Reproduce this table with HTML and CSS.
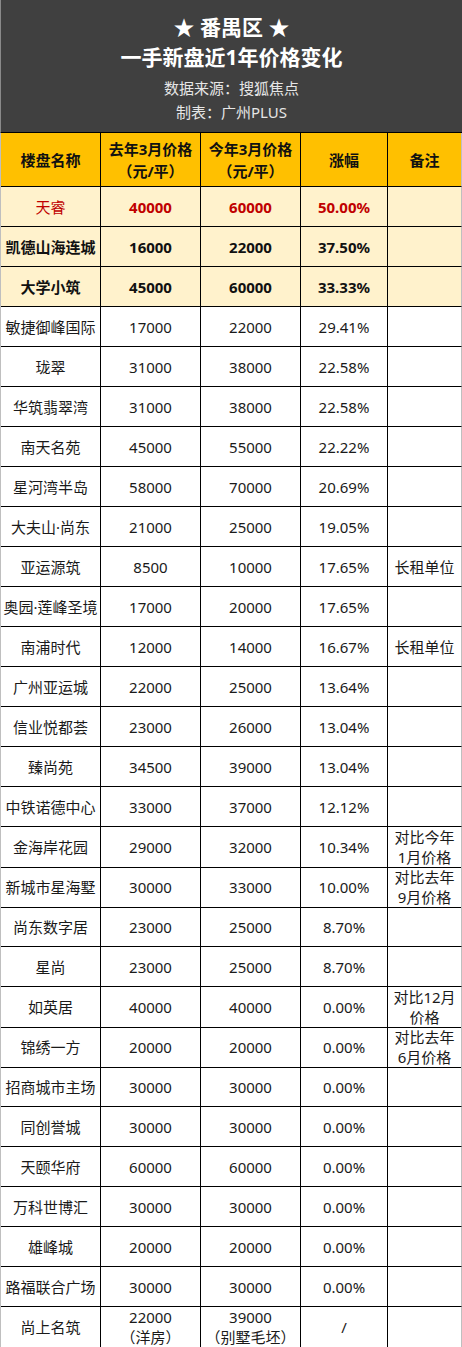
FILE: index.html
```html
<!DOCTYPE html>
<html lang="zh-CN">
<head>
    <meta charset="UTF-8">
    <meta name="viewport" content="width=device-width, initial-scale=1.0">
    <title>番禺区 一手新盘近1年价格变化</title>
    <link rel="stylesheet" href="styles.css">
</head>
<body>
    <div class="sheet">
        <header class="banner">
            <div class="title">★ 番禺区 ★</div>
            <div class="title">一手新盘近1年价格变化</div>
            <div class="sub">数据来源：搜狐焦点</div>
            <div class="sub">制表：广州PLUS</div>
        </header>

        <div class="grid">
            <div class="row head">
                <div class="cell">楼盘名称</div>
                <div class="cell"><span>去年3月价格</span><span>（元/平）</span></div>
                <div class="cell"><span>今年3月价格</span><span>（元/平）</span></div>
                <div class="cell">涨幅</div>
                <div class="cell">备注</div>
            </div>

            <!-- top three -->
            <div class="row top first">
                <div class="cell name">天睿</div>
                <div class="cell">40000</div>
                <div class="cell">60000</div>
                <div class="cell">50.00%</div>
                <div class="cell"></div>
            </div>
            <div class="row top">
                <div class="cell">凯德山海连城</div>
                <div class="cell">16000</div>
                <div class="cell">22000</div>
                <div class="cell">37.50%</div>
                <div class="cell"></div>
            </div>
            <div class="row top">
                <div class="cell">大学小筑</div>
                <div class="cell">45000</div>
                <div class="cell">60000</div>
                <div class="cell">33.33%</div>
                <div class="cell"></div>
            </div>

            <div class="row">
                <div class="cell">敏捷御峰国际</div>
                <div class="cell">17000</div>
                <div class="cell">22000</div>
                <div class="cell">29.41%</div>
                <div class="cell"></div>
            </div>
            <div class="row">
                <div class="cell">珑翠</div>
                <div class="cell">31000</div>
                <div class="cell">38000</div>
                <div class="cell">22.58%</div>
                <div class="cell"></div>
            </div>
            <div class="row">
                <div class="cell">华筑翡翠湾</div>
                <div class="cell">31000</div>
                <div class="cell">38000</div>
                <div class="cell">22.58%</div>
                <div class="cell"></div>
            </div>
            <div class="row">
                <div class="cell">南天名苑</div>
                <div class="cell">45000</div>
                <div class="cell">55000</div>
                <div class="cell">22.22%</div>
                <div class="cell"></div>
            </div>
            <div class="row">
                <div class="cell">星河湾半岛</div>
                <div class="cell">58000</div>
                <div class="cell">70000</div>
                <div class="cell">20.69%</div>
                <div class="cell"></div>
            </div>
            <div class="row">
                <div class="cell">大夫山·尚东</div>
                <div class="cell">21000</div>
                <div class="cell">25000</div>
                <div class="cell">19.05%</div>
                <div class="cell"></div>
            </div>
            <div class="row">
                <div class="cell">亚运源筑</div>
                <div class="cell">8500</div>
                <div class="cell">10000</div>
                <div class="cell">17.65%</div>
                <div class="cell">长租单位</div>
            </div>
            <div class="row">
                <div class="cell">奥园·莲峰圣境</div>
                <div class="cell">17000</div>
                <div class="cell">20000</div>
                <div class="cell">17.65%</div>
                <div class="cell"></div>
            </div>
            <div class="row">
                <div class="cell">南浦时代</div>
                <div class="cell">12000</div>
                <div class="cell">14000</div>
                <div class="cell">16.67%</div>
                <div class="cell">长租单位</div>
            </div>
            <div class="row">
                <div class="cell">广州亚运城</div>
                <div class="cell">22000</div>
                <div class="cell">25000</div>
                <div class="cell">13.64%</div>
                <div class="cell"></div>
            </div>
            <div class="row">
                <div class="cell">信业悦都荟</div>
                <div class="cell">23000</div>
                <div class="cell">26000</div>
                <div class="cell">13.04%</div>
                <div class="cell"></div>
            </div>
            <div class="row">
                <div class="cell">臻尚苑</div>
                <div class="cell">34500</div>
                <div class="cell">39000</div>
                <div class="cell">13.04%</div>
                <div class="cell"></div>
            </div>
            <div class="row">
                <div class="cell">中铁诺德中心</div>
                <div class="cell">33000</div>
                <div class="cell">37000</div>
                <div class="cell">12.12%</div>
                <div class="cell"></div>
            </div>
            <div class="row">
                <div class="cell">金海岸花园</div>
                <div class="cell">29000</div>
                <div class="cell">32000</div>
                <div class="cell">10.34%</div>
                <div class="cell"><span>对比今年</span><span>1月价格</span></div>
            </div>
            <div class="row">
                <div class="cell">新城市星海墅</div>
                <div class="cell">30000</div>
                <div class="cell">33000</div>
                <div class="cell">10.00%</div>
                <div class="cell"><span>对比去年</span><span>9月价格</span></div>
            </div>
            <div class="row">
                <div class="cell">尚东数字居</div>
                <div class="cell">23000</div>
                <div class="cell">25000</div>
                <div class="cell">8.70%</div>
                <div class="cell"></div>
            </div>
            <div class="row">
                <div class="cell">星尚</div>
                <div class="cell">23000</div>
                <div class="cell">25000</div>
                <div class="cell">8.70%</div>
                <div class="cell"></div>
            </div>
            <div class="row">
                <div class="cell">如英居</div>
                <div class="cell">40000</div>
                <div class="cell">40000</div>
                <div class="cell">0.00%</div>
                <div class="cell"><span>对比12月</span><span>价格</span></div>
            </div>
            <div class="row">
                <div class="cell">锦绣一方</div>
                <div class="cell">20000</div>
                <div class="cell">20000</div>
                <div class="cell">0.00%</div>
                <div class="cell"><span>对比去年</span><span>6月价格</span></div>
            </div>
            <div class="row">
                <div class="cell">招商城市主场</div>
                <div class="cell">30000</div>
                <div class="cell">30000</div>
                <div class="cell">0.00%</div>
                <div class="cell"></div>
            </div>
            <div class="row">
                <div class="cell">同创誉城</div>
                <div class="cell">30000</div>
                <div class="cell">30000</div>
                <div class="cell">0.00%</div>
                <div class="cell"></div>
            </div>
            <div class="row">
                <div class="cell">天颐华府</div>
                <div class="cell">60000</div>
                <div class="cell">60000</div>
                <div class="cell">0.00%</div>
                <div class="cell"></div>
            </div>
            <div class="row">
                <div class="cell">万科世博汇</div>
                <div class="cell">30000</div>
                <div class="cell">30000</div>
                <div class="cell">0.00%</div>
                <div class="cell"></div>
            </div>
            <div class="row">
                <div class="cell">雄峰城</div>
                <div class="cell">20000</div>
                <div class="cell">20000</div>
                <div class="cell">0.00%</div>
                <div class="cell"></div>
            </div>
            <div class="row">
                <div class="cell">路福联合广场</div>
                <div class="cell">30000</div>
                <div class="cell">30000</div>
                <div class="cell">0.00%</div>
                <div class="cell"></div>
            </div>
            <div class="row">
                <div class="cell">尚上名筑</div>
                <div class="cell"><span>22000</span><span>（洋房）</span></div>
                <div class="cell"><span>39000</span><span>（别墅毛坯）</span></div>
                <div class="cell">/</div>
                <div class="cell"></div>
            </div>
        </div>
    </div>
</body>
</html>
```

FILE: styles.css
```css
/* Basic Reset */
* {
    margin: 0;
    padding: 0;
    box-sizing: border-box;
}

body {
    font-family: "Noto Sans", "Noto Sans CJK SC", sans-serif;
    background: #ffffff;
    color: #1a1a1a;
}

.sheet {
    width: 462px;
}

/* Dark banner */
.banner {
    height: 132px;
    background: #404040;
    color: #ffffff;
    text-align: center;
    padding-top: 12px;
    border-left: 1px solid #8a8a8a;
}

.banner .title {
    font-size: 21px;
    font-weight: 700;
    line-height: 30px;
}

.banner .title + .sub {
    margin-top: 4px;
}

.banner .sub {
    font-size: 15px;
    line-height: 24px;
    color: #e6e6e6;
}

/* Price grid */
.grid {
    border-top: 1px solid #000000;
    border-left: 1px solid #bfbfbf;
}

.row {
    display: grid;
    grid-template-columns: 100px 100px 100px 87px 74px;
    height: 40px;
}

.cell {
    display: flex;
    flex-direction: column;
    align-items: center;
    justify-content: center;
    border-right: 1px solid #000000;
    border-bottom: 1px solid #000000;
    font-size: 15px;
    line-height: 20px;
    white-space: nowrap;
}

.cell:last-child {
    border-right-color: #bfbfbf;
}

.row.head {
    height: 54px;
    background: #ffc000;
}

.row.head .cell {
    font-weight: 700;
    line-height: 22px;
    color: #111111;
}

.row.top {
    background: #fff2cc;
}

.row.top .cell {
    font-weight: 700;
    color: #111111;
}

.row.first .cell {
    color: #c00000;
}

.row.first .name {
    font-weight: 400;
}
```
